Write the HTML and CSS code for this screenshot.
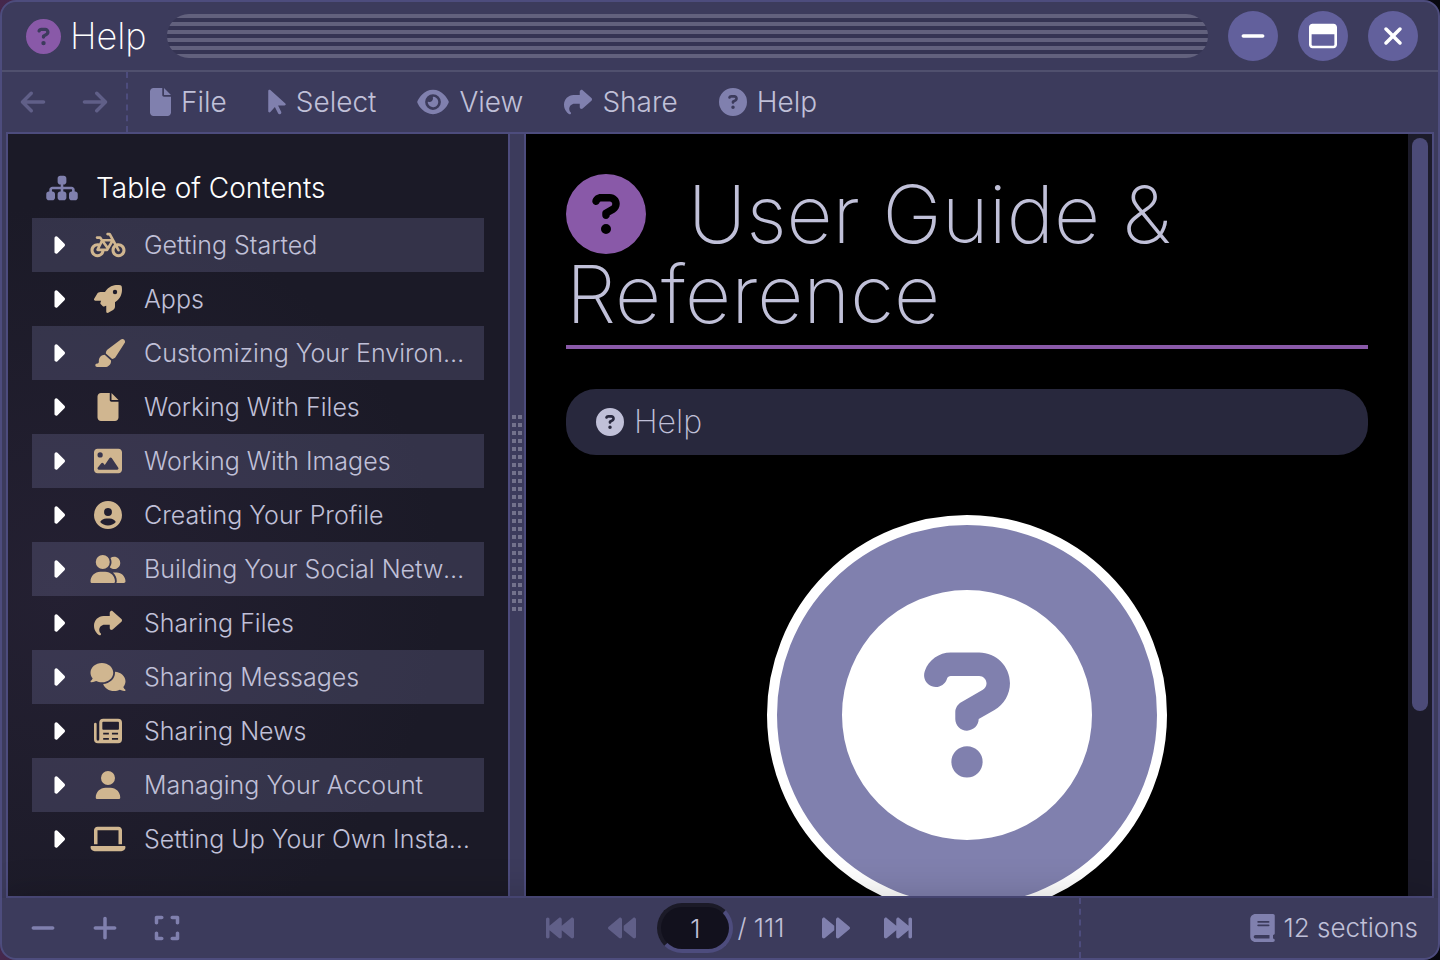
FILE: index.html
```html
<!DOCTYPE html>
<html lang="en">
<head>
<meta charset="utf-8">
<title>Help</title>
<link rel="stylesheet" href="styles.css">
</head>
<body>
<svg class="sprite" aria-hidden="true">
<symbol id="question" viewBox="0 0 512 512"><path d="M256 512A256 256 0 1 0 256 0a256 256 0 1 0 0 512zM169.8 165.3c7.9-22.3 29.1-37.3 52.8-37.3h58.3c34.9 0 63.1 28.3 63.1 63.1c0 22.6-12.1 43.5-31.7 54.8L280 264.4c-.2 13-10.9 23.6-24 23.6c-13.3 0-24-10.7-24-24V250.5c0-8.6 4.6-16.5 12.1-20.8l44.3-25.4c4.7-2.7 7.6-7.7 7.6-13.1c0-8.4-6.8-15.1-15.1-15.1H222.6c-3.4 0-6.4 2.1-7.5 5.3l-.4 1.2c-4.4 12.5-18.2 19-30.6 14.6s-19-18.2-14.6-30.6l.4-1.2zM224 352a32 32 0 1 1 64 0 32 32 0 1 1 -64 0z"/></symbol>
<symbol id="file" viewBox="0 0 384 512"><path d="M0 64C0 28.7 28.7 0 64 0H224V128c0 17.7 14.3 32 32 32H384V448c0 35.3-28.7 64-64 64H64c-35.3 0-64-28.7-64-64V64zm384 64H256V0L384 128z"/></symbol>
<symbol id="pointer" viewBox="0 0 320 512"><path d="M0 55.2V426c0 12.2 9.9 22 22 22c6.3 0 12.4-2.7 16.6-7.5L121.2 346l58.1 116.3c7.9 15.8 27.1 22.2 42.9 14.3s22.2-27.1 14.3-42.9L179.8 320H297.9c12.2 0 22.1-9.9 22.1-22.1c0-6.3-2.7-12.3-7.4-16.5L38.6 37.9C34.3 34.1 28.9 32 23.2 32C10.4 32 0 42.4 0 55.2z"/></symbol>
<symbol id="eye" viewBox="0 0 576 512"><path d="M288 32c-80.8 0-145.5 36.8-192.6 80.6C48.6 156 17.3 208 2.5 243.7c-3.3 7.9-3.3 16.7 0 24.6C17.3 304 48.6 356 95.4 399.4C142.5 443.2 207.2 480 288 480s145.5-36.8 192.6-80.6c46.8-43.5 78.1-95.4 93-131.1c3.3-7.9 3.3-16.7 0-24.6c-14.9-35.7-46.2-87.7-93-131.1C433.5 68.8 368.8 32 288 32zM144 256a144 144 0 1 1 288 0 144 144 0 1 1 -288 0zm144-64c0 35.3-28.7 64-64 64c-7.1 0-13.9-1.2-20.3-3.3c-5.5-1.8-11.9 1.6-11.7 7.4c.3 6.9 1.3 13.8 3.2 20.7c13.7 51.2 66.4 81.6 117.6 67.9s81.6-66.4 67.9-117.6c-11.1-41.5-47.8-69.4-88.6-71.1c-5.8-.2-9.2 6.1-7.4 11.7c2.1 6.4 3.3 13.2 3.3 20.3z"/></symbol>
<symbol id="share" viewBox="0 0 512 512"><path d="M307 34.8c-11.5 5.1-19 16.6-19 29.2v64H176C78.8 128 0 206.8 0 304C0 417.3 81.5 467.9 100.2 478.1c2.5 1.4 5.3 1.9 8.1 1.9c10.9 0 19.7-8.9 19.7-19.7c0-7.5-4.3-14.4-9.8-19.5C108.8 431.9 96 414.4 96 384c0-53 43-96 96-96h96v64c0 12.6 7.4 24.1 19 29.2s25 3 34.4-5.4l160-144c6.7-6.1 10.6-14.7 10.6-23.8s-3.8-17.7-10.6-23.8l-160-144c-9.4-8.5-22.9-10.6-34.4-5.4z"/></symbol>
<symbol id="left" viewBox="0 0 448 512"><path d="M9.4 233.4c-12.5 12.5-12.5 32.8 0 45.3l160 160c12.5 12.5 32.8 12.5 45.3 0s12.5-32.8 0-45.3L109.2 288 416 288c17.7 0 32-14.3 32-32s-14.3-32-32-32l-306.7 0L214.6 118.6c12.5-12.5 12.5-32.8 0-45.3s-32.8-12.5-45.3 0l-160 160z"/></symbol>
<symbol id="minus" viewBox="0 0 448 512"><path d="M432 256c0 17.7-14.3 32-32 32L48 288c-17.7 0-32-14.3-32-32s14.3-32 32-32l352 0c17.7 0 32 14.3 32 32z"/></symbol>
<symbol id="plus" viewBox="0 0 448 512"><path d="M256 80c0-17.7-14.3-32-32-32s-32 14.3-32 32V224H48c-17.7 0-32 14.3-32 32s14.3 32 32 32H192V432c0 17.7 14.3 32 32 32s32-14.3 32-32V288H400c17.7 0 32-14.3 32-32s-14.3-32-32-32H256V80z"/></symbol>
<symbol id="expand" viewBox="0 0 448 512"><path d="M32 32C14.3 32 0 46.3 0 64v96c0 17.7 14.3 32 32 32s32-14.3 32-32V96h64c17.7 0 32-14.3 32-32s-14.3-32-32-32H32zM64 352c0-17.7-14.3-32-32-32s-32 14.3-32 32v96c0 17.7 14.3 32 32 32h96c17.7 0 32-14.3 32-32s-14.3-32-32-32H64V352zM320 32c-17.7 0-32 14.3-32 32s14.3 32 32 32h64v64c0 17.7 14.3 32 32 32s32-14.3 32-32V64c0-17.7-14.3-32-32-32H320zM448 352c0-17.7-14.3-32-32-32s-32 14.3-32 32v64H320c-17.7 0-32 14.3-32 32s14.3 32 32 32h96c17.7 0 32-14.3 32-32V352z"/></symbol>
<symbol id="close" viewBox="0 0 384 512"><path d="M342.6 150.6c12.5-12.5 12.5-32.8 0-45.3s-32.8-12.5-45.3 0L192 210.7 86.6 105.4c-12.5-12.5-32.8-12.5-45.3 0s-12.5 32.8 0 45.3L146.7 256 41.4 361.4c-12.5 12.5-12.5 32.8 0 45.3s32.8 12.5 45.3 0L192 301.3 297.4 406.6c12.5 12.5 32.8 12.5 45.3 0s12.5-32.8 0-45.3L237.3 256 342.6 150.6z"/></symbol>
<symbol id="maximize" viewBox="0 0 512 512"><path d="M.3 89.5C.1 91.6 0 93.8 0 96V224 416c0 35.3 28.7 64 64 64l384 0c35.3 0 64-28.7 64-64V224 96c0-35.3-28.7-64-64-64H64c-2.2 0-4.4 .1-6.5 .3c-9.2 .9-17.8 3.8-25.5 8.2C21.8 46.5 13.4 55.1 7.7 65.5c-3.9 7.3-6.5 15.4-7.4 24zM48 224H464l0 192c0 8.8-7.2 16-16 16L64 432c-8.8 0-16-7.2-16-16l0-192z"/></symbol>
<symbol id="sitemap" viewBox="0 0 576 512"><path d="M208 80c0-26.5 21.5-48 48-48h64c26.5 0 48 21.5 48 48v64c0 26.5-21.5 48-48 48h-8v40H464c30.9 0 56 25.1 56 56v32h8c26.5 0 48 21.5 48 48v64c0 26.5-21.5 48-48 48H464c-26.5 0-48-21.5-48-48V368c0-26.5 21.5-48 48-48h8V288c0-4.4-3.6-8-8-8H312v40h8c26.5 0 48 21.5 48 48v64c0 26.5-21.5 48-48 48H256c-26.5 0-48-21.5-48-48V368c0-26.5 21.5-48 48-48h8V280H112c-4.4 0-8 3.6-8 8v32h8c26.5 0 48 21.5 48 48v64c0 26.5-21.5 48-48 48H48c-26.5 0-48-21.5-48-48V368c0-26.5 21.5-48 48-48h8V288c0-30.9 25.1-56 56-56H264V192h-8c-26.5 0-48-21.5-48-48V80z"/></symbol>
<symbol id="caret" viewBox="0 0 256 512"><path d="M246.6 278.6c12.5-12.5 12.5-32.8 0-45.3l-128-128c-9.2-9.2-22.9-11.9-34.9-6.9s-19.8 16.6-19.8 29.6l0 256c0 12.9 7.8 24.6 19.8 29.6s25.7 2.2 34.9-6.9l128-128z"/></symbol>
<symbol id="bicycle" viewBox="0 0 640 512"><path d="M312 32c-13.3 0-24 10.7-24 24s10.7 24 24 24h25.7l34.6 64H222.9l-27.4-38C191 99.7 183.7 96 176 96H120c-13.3 0-24 10.7-24 24s10.7 24 24 24h43.7l22.1 30.7-26.6 53.1c-10-2.5-20.5-3.8-31.2-3.8C57.3 224 0 281.3 0 352s57.3 128 128 128c65.3 0 119.1-48.9 127-112h49c8.5 0 16.3-4.5 20.7-11.8l84.8-143.5 21.7 40.1C402.4 276.3 384 312 384 352c0 70.7 57.3 128 128 128s128-57.3 128-128s-57.3-128-128-128c-13.5 0-26.5 2.1-38.7 6L375.4 48.8C369.8 38.4 359 32 347.2 32H312zM458.6 303.7l32.3 59.7c6.3 11.7 20.9 16 32.5 9.7s16-20.9 9.7-32.5l-32.3-59.7c3.6-.6 7.4-.9 11.2-.9c39.8 0 72 32.2 72 72s-32.2 72-72 72s-72-32.2-72-72c0-18.6 7-35.5 18.6-48.3zM133.2 368h65c-7.3 32.1-36 56-70.2 56c-39.8 0-72-32.2-72-72s32.2-72 72-72c1.7 0 3.4 .1 5.1 .2l-24.2 48.5c-9 18.1 4.1 39.4 24.3 39.4zm33.7-48l50.7-101.3 72.9 101.2-.1 .1H166.8zm90.6-128H365.9L317 274.8 257.4 192z"/></symbol>
<symbol id="rocket" viewBox="0 0 512 512"><path d="M156.6 384.9L125.7 354c-8.5-8.5-11.5-20.8-7.7-32.2c3-8.9 7-20.5 11.8-33.8L24 288c-8.6 0-16.6-4.6-20.9-12.1s-4.2-16.7 .2-24.1l52.5-88.5c13-21.9 36.5-35.3 61.9-35.3l82.3 0c2.4-4 4.8-7.7 7.2-11.3C289.1-4.1 411.1-8.1 483.9 5.3c11.6 2.1 20.6 11.2 22.8 22.8c13.4 72.9 9.3 194.8-111.4 276.7c-3.5 2.4-7.3 4.8-11.3 7.2v82.3c0 25.4-13.4 49-35.3 61.9l-88.5 52.5c-7.4 4.4-16.6 4.5-24.1 .2s-12.1-12.2-12.1-20.9V380.8c-14.1 4.9-26.4 8.9-35.7 11.9c-11.2 3.6-23.4 .5-31.8-7.8zM384 168a40 40 0 1 0 0-80 40 40 0 1 0 0 80z"/></symbol>
<symbol id="brush" viewBox="-24 0 576 512"><path d="M339.3 367.1c27.3-3.9 51.9-19.4 67.2-42.9L568.2 74.1c12.6-19.5 9.4-45.3-7.6-61.2S517.7-4.4 499.1 9.6L262.4 187.2c-24 18-38.2 46.1-38.4 76.1L339.3 367.1zm-19.6 25.4l-116-104.4C143.9 290.3 96 339.6 96 400c0 3.9 .2 7.8 .6 11.6C98.4 429.1 86.4 448 68.8 448H64c-17.7 0-32 14.3-32 32s14.3 32 32 32H208c61.9 0 112-50.1 112-112c0-2.5-.1-5-.2-7.5z"/></symbol>
<symbol id="image" viewBox="0 0 512 512"><path d="M0 96C0 60.7 28.7 32 64 32H448c35.3 0 64 28.7 64 64V416c0 35.3-28.7 64-64 64H64c-35.3 0-64-28.7-64-64V96zM323.8 202.5c-4.5-6.6-11.9-10.5-19.8-10.5s-15.4 3.9-19.8 10.5l-87 127.6L170.7 297c-4.6-5.7-11.5-9-18.7-9s-14.2 3.3-18.7 9l-64 80c-5.8 7.2-6.9 17.1-2.9 25.4s12.4 13.6 21.6 13.6h96 32H424c8.9 0 17.1-4.9 21.2-12.8s3.6-17.4-1.4-24.7l-120-176zM112 192a48 48 0 1 0 0-96 48 48 0 1 0 0 96z"/></symbol>
<symbol id="profile" viewBox="0 0 512 512"><path d="M399 384.2C376.9 345.8 335.4 320 288 320H224c-47.4 0-88.9 25.8-111 64.2c35.2 39.2 86.2 63.8 143 63.8s107.8-24.7 143-63.8zM0 256a256 256 0 1 1 512 0A256 256 0 1 1 0 256zm256 16a72 72 0 1 0 0-144 72 72 0 1 0 0 144z"/></symbol>
<symbol id="group" viewBox="0 0 640 512"><path d="M96 128a128 128 0 1 1 256 0A128 128 0 1 1 96 128zM0 482.3C0 383.8 79.8 304 178.3 304h91.4C368.2 304 448 383.8 448 482.3c0 16.4-13.3 29.7-29.7 29.7H29.7C13.3 512 0 498.7 0 482.3zM609.3 512H471.4c5.4-9.4 8.6-20.3 8.6-32v-8c0-60.7-27.1-115.2-69.8-151.8c2.4-.1 4.7-.2 7.1-.2h61.4C567.8 320 640 392.2 640 481.3c0 17-13.8 30.7-30.7 30.7zM432 256c-31 0-59-12.6-79.3-32.9C372.4 196.5 384 163.6 384 128c0-26.8-6.6-52.1-18.3-74.3C384.3 40.1 407.2 32 432 32c61.9 0 112 50.1 112 112s-50.1 112-112 112z"/></symbol>
<symbol id="comments" viewBox="0 0 640 512"><path d="M208 352c114.9 0 208-78.8 208-176S322.9 0 208 0S0 78.8 0 176c0 38.6 14.7 74.3 39.6 103.4c-3.5 9.4-8.7 17.7-14.2 24.7c-4.8 6.2-9.7 11-13.3 14.3c-1.8 1.6-3.3 2.9-4.3 3.7c-.5 .4-.9 .7-1.1 .8l-.2 .2C1 327.2-1.4 334.4 .8 340.9S9.1 352 16 352c21.8 0 43.8-5.6 62.1-12.5c9.2-3.5 17.8-7.4 25.2-11.4C134.1 343.3 169.8 352 208 352zM448 176c0 112.3-99.1 196.9-216.5 207C255.8 457.4 336.4 512 432 512c38.2 0 73.9-8.7 104.7-23.9c7.5 4 16 7.9 25.2 11.4c18.3 6.9 40.3 12.5 62.1 12.5c6.9 0 13.1-4.5 15.2-11.1c2.1-6.6-.2-13.8-5.8-17.9l-.2-.2c-.2-.2-.6-.4-1.1-.8c-1-.8-2.5-2-4.3-3.7c-3.6-3.3-8.5-8.1-13.3-14.3c-5.5-7-10.7-15.4-14.2-24.7c24.9-29 39.6-64.7 39.6-103.4c0-92.8-84.9-168.9-192.6-175.5c.4 5.1 .6 10.3 .6 15.5z"/></symbol>
<symbol id="news" viewBox="0 0 512 512"><path d="M168 32H440a72 72 0 0 1 72 72V408a72 72 0 0 1-72 72H72a72 72 0 0 1-72-72V128a24 24 0 0 1 48 0V408a24 24 0 0 0 48 0V104a72 72 0 0 1 72-72zM168 88a16 16 0 0 0-16 16V216a16 16 0 0 0 16 16H440a16 16 0 0 0 16-16V104a16 16 0 0 0-16-16zM168 288h104v32H168zM328 288h112v32H328zM168 384h104v32H168zM328 384h112v32H328z"/></symbol>
<symbol id="user" viewBox="0 0 448 512"><path d="M224 256A128 128 0 1 0 224 0a128 128 0 1 0 0 256zm-45.7 48C79.8 304 0 383.8 0 482.3C0 498.7 13.3 512 29.7 512H418.3c16.4 0 29.7-13.3 29.7-29.7C448 383.8 368.2 304 269.7 304H178.3z"/></symbol>
<symbol id="laptop" viewBox="0 0 640 512"><path d="M128 32C92.7 32 64 60.7 64 96V352h64V96H512V352h64V96c0-35.3-28.7-64-64-64H128zM19.2 384C8.6 384 0 392.6 0 403.2C0 445.6 34.4 480 76.8 480H563.2c42.4 0 76.8-34.4 76.8-76.8c0-10.6-8.6-19.2-19.2-19.2H19.2z"/></symbol>
<symbol id="forward" viewBox="0 0 512 512"><path d="M52.5 440.6c-9.5 7.9-22.8 9.7-34.1 4.4S0 428.4 0 416V96C0 83.6 7.2 72.3 18.4 67s24.5-3.6 34.1 4.4L224 214.3V256v41.7L52.5 440.6zM256 352V256 128 96c0-12.4 7.2-23.7 18.4-29s24.5-3.6 34.1 4.4l192 160c7.3 6.1 11.5 15.1 11.5 24.6s-4.2 18.5-11.5 24.6l-192 160c-9.5 7.9-22.8 9.7-34.1 4.4s-18.4-16.6-18.4-29V352z"/></symbol>
<symbol id="last" viewBox="0 0 512 512"><path d="M18.4 445c11.2 5.3 24.5 3.6 34.1-4.4L224 297.7V416c0 12.4 7.2 23.7 18.4 29s24.5 3.6 34.1-4.4L448 297.7V416c0 17.7 14.3 32 32 32s32-14.3 32-32V96c0-17.7-14.3-32-32-32s-32 14.3-32 32V214.3L276.5 71.4c-9.5-7.9-22.8-9.7-34.1-4.4S224 83.6 224 96V214.3L52.5 71.4c-9.5-7.9-22.8-9.7-34.1-4.4S0 83.6 0 96V416c0 12.4 7.2 23.7 18.4 29z"/></symbol>
<symbol id="book" viewBox="0 0 448 512"><path d="M96 0C43 0 0 43 0 96V416c0 53 43 96 96 96H384h32c17.7 0 32-14.3 32-32s-14.3-32-32-32V384c17.7 0 32-14.3 32-32V32c0-17.7-14.3-32-32-32H384 96zm0 384H352v64H96c-17.7 0-32-14.3-32-32s14.3-32 32-32zm32-240c0-8.8 7.2-16 16-16H336c8.8 0 16 7.2 16 16s-7.2 16-16 16H144c-8.8 0-16-7.2-16-16zm16 48H336c8.8 0 16 7.2 16 16s-7.2 16-16 16H144c-8.8 0-16-7.2-16-16s7.2-16 16-16z"/></symbol>
</svg>
<div class="window">
  <header class="titlebar">
    <svg class="title-icon"><use href="#question"/></svg>
    <span class="title">Help</span>
    <div class="grip"></div>
    <div class="controls">
      <button class="control" aria-label="Minimize"><svg class="icon"><use href="#minus"/></svg></button>
      <button class="control" aria-label="Maximize"><svg class="icon"><use href="#maximize"/></svg></button>
      <button class="control" aria-label="Close"><svg class="icon"><use href="#close"/></svg></button>
    </div>
  </header>
  <nav class="menubar">
    <div class="history">
      <button class="tool" aria-label="Back" disabled><svg class="icon"><use href="#left"/></svg></button>
      <button class="tool" aria-label="Forward" disabled><svg class="icon flip"><use href="#left"/></svg></button>
    </div>
    <button class="menu"><svg class="icon w21"><use href="#file"/></svg>File</button>
    <button class="menu"><svg class="icon w18"><use href="#pointer"/></svg>Select</button>
    <button class="menu"><svg class="icon w32"><use href="#eye"/></svg>View</button>
    <button class="menu"><svg class="icon"><use href="#share"/></svg>Share</button>
    <button class="menu"><svg class="icon"><use href="#question"/></svg>Help</button>
  </nav>
  <div class="body">
    <aside class="sidebar">
      <h2 class="toc-title"><svg class="icon w32"><use href="#sitemap"/></svg>Table of Contents</h2>
      <ul class="toc">
        <li><a class="entry" href="#"><svg class="caret"><use href="#caret"/></svg><svg class="icon w36"><use href="#bicycle"/></svg><span class="label">Getting Started</span></a></li>
        <li><a class="entry" href="#"><svg class="caret"><use href="#caret"/></svg><svg class="icon w36"><use href="#rocket"/></svg><span class="label">Apps</span></a></li>
        <li><a class="entry" href="#"><svg class="caret"><use href="#caret"/></svg><svg class="icon w36"><use href="#brush"/></svg><span class="label">Customizing Your Environment</span></a></li>
        <li><a class="entry" href="#"><svg class="caret"><use href="#caret"/></svg><svg class="icon w36"><use href="#file"/></svg><span class="label">Working With Files</span></a></li>
        <li><a class="entry" href="#"><svg class="caret"><use href="#caret"/></svg><svg class="icon w36"><use href="#image"/></svg><span class="label">Working With Images</span></a></li>
        <li><a class="entry" href="#"><svg class="caret"><use href="#caret"/></svg><svg class="icon w36"><use href="#profile"/></svg><span class="label">Creating Your Profile</span></a></li>
        <li><a class="entry" href="#"><svg class="caret"><use href="#caret"/></svg><svg class="icon w36"><use href="#group"/></svg><span class="label">Building Your Social Network</span></a></li>
        <li><a class="entry" href="#"><svg class="caret"><use href="#caret"/></svg><svg class="icon w36"><use href="#share"/></svg><span class="label">Sharing Files</span></a></li>
        <li><a class="entry" href="#"><svg class="caret"><use href="#caret"/></svg><svg class="icon w36"><use href="#comments"/></svg><span class="label">Sharing Messages</span></a></li>
        <li><a class="entry" href="#"><svg class="caret"><use href="#caret"/></svg><svg class="icon w36"><use href="#news"/></svg><span class="label">Sharing News</span></a></li>
        <li><a class="entry" href="#"><svg class="caret"><use href="#caret"/></svg><svg class="icon w36"><use href="#user"/></svg><span class="label">Managing Your Account</span></a></li>
        <li><a class="entry" href="#"><svg class="caret"><use href="#caret"/></svg><svg class="icon w36"><use href="#laptop"/></svg><span class="label">Setting Up Your Own Instance</span></a></li>
      </ul>
    </aside>
    <div class="splitter"><div class="dots"></div></div>
    <main class="page">
      <h1 class="heading"><svg class="heading-icon"><use href="#question"/></svg>User Guide &amp; Reference</h1>
      <div class="crumbs"><a class="crumb" href="#"><svg class="icon"><use href="#question"/></svg>Help</a></div>
      <div class="emblem"><svg class="emblem-icon"><use href="#question"/></svg></div>
    </main>
    <div class="scrollbar"><div class="thumb"></div></div>
  </div>
  <footer class="footer">
    <div class="zoom">
      <button class="tool" aria-label="Zoom out"><svg class="icon"><use href="#minus"/></svg></button>
      <button class="tool" aria-label="Zoom in"><svg class="icon"><use href="#plus"/></svg></button>
      <button class="tool" aria-label="Fit"><svg class="icon"><use href="#expand"/></svg></button>
    </div>
    <div class="pager">
      <button class="tool" aria-label="First page" disabled><svg class="icon flip"><use href="#last"/></svg></button>
      <button class="tool" aria-label="Previous page" disabled><svg class="icon flip"><use href="#forward"/></svg></button>
      <input class="page-input" aria-label="Page" value="1">
      <span class="total">/ 111</span>
      <button class="tool" aria-label="Next page"><svg class="icon"><use href="#forward"/></svg></button>
      <button class="tool" aria-label="Last page"><svg class="icon"><use href="#last"/></svg></button>
    </div>
    <div class="status"><svg class="icon w25"><use href="#book"/></svg>12 sections</div>
  </footer>
</div>
</body>
</html>
```
FILE: styles.css
```css
* { box-sizing: border-box; }
html, body { height: 100%; }
body {
  margin: 0;
  background: linear-gradient(90deg, #45284c, #08080f);
  font: 300 26px/32px Inter, sans-serif;
  color: #c0c0d8;
}
h1, h2, ul { margin: 0; padding: 0; font-weight: inherit; }
ul { list-style: none; }
a { color: inherit; text-decoration: none; }
button { border: 0; margin: 0; padding: 0; background: none; font: inherit; color: inherit; }
svg { fill: currentColor; fill-rule: evenodd; flex: none; }
.sprite { position: absolute; width: 0; height: 0; }
.icon { width: 28px; height: 28px; }
.w18 { width: 18px; }
.w21 { width: 21px; }
.w25 { width: 25px; }
.w32 { width: 32px; }
.w36 { width: 36px; }
.flip { transform: scaleX(-1); }

.window {
  display: flex;
  flex-direction: column;
  height: 100vh;
  border: 2px solid #4d4c7d;
  border-radius: 16px;
  background: #3c3b5c;
  overflow: hidden;
}
.titlebar {
  display: flex;
  align-items: center;
  flex: none;
  height: 70px;
  padding: 0 20px 0 24px;
  border-bottom: 2px solid #50506e;
  color: #fff;
}
.title-icon { width: 35px; height: 35px; color: #8959a8; }
.title { margin: 0 20px 0 9px; font-size: 36px; font-weight: 250; line-height: 44px; }
.grip {
  flex: 1;
  height: 44px;
  border-radius: 22px;
  background: repeating-linear-gradient(#62617d 0 4px, #353453 4px 8px);
}
.controls { display: flex; gap: 20px; margin-left: 20px; }
.control {
  display: grid;
  place-items: center;
  width: 50px;
  height: 50px;
  border-radius: 50%;
  background: #62609c;
}

.menubar { display: flex; flex: none; height: 60px; }
.history {
  display: flex;
  margin-right: 22px;
  border-right: 2px dashed #4d4c7d;
}
.tool { display: grid; place-items: center; width: 62px; height: 60px; color: #8080ae; }
.tool:disabled { color: #605f88; }
.menu {
  display: flex;
  align-items: center;
  gap: 10px;
  margin-right: 41px;
  font-size: 28px;
}
.menu svg, .toc-title svg, .status svg { color: #8080ae; }

.body {
  display: flex;
  flex: 1;
  min-height: 0;
  margin: 0 4px;
  border: 2px solid #4d4c7d;
}
.sidebar {
  flex: 0 0 500px;
  min-width: 0;
  padding: 38px 24px 0;
  background: radial-gradient(circle at 10% 60%, #242032, #1b1a27 60%);
}
.toc-title {
  display: flex;
  align-items: center;
  gap: 18px;
  height: 46px;
  padding: 0 0 14px 14px;
  font-size: 28px;
  color: #fff;
}
.entry {
  display: flex;
  align-items: center;
  height: 54px;
  padding: 0 10px 0 18px;
}
.toc li:nth-child(odd) { background: #8080ae40; }
.caret { width: 16px; height: 28px; color: #fff; }
.entry .icon { margin: 0 18px 0 24px; color: #d0b690; }
.label {
  overflow: hidden;
  white-space: nowrap;
  text-overflow: ellipsis;
  font-size: 25px;
}
.splitter {
  display: flex;
  align-items: center;
  justify-content: center;
  flex: none;
  width: 18px;
  border: solid #4d4c7d;
  border-width: 0 2px;
  background: #3c3b5c;
}
.dots {
  width: 10px;
  height: 200px;
  background:
    linear-gradient(90deg, transparent 4px, #3c3b5c 4px 6px, transparent 6px),
    repeating-linear-gradient(#73728c 0 4px, #3c3b5c 4px 8px);
}
.page {
  flex: 1;
  min-width: 0;
  padding: 40px 40px 0;
  background: #000;
  overflow: hidden;
}
.heading {
  padding-bottom: 11px;
  border-bottom: 4px solid #8959a8;
  font-size: 80px;
  font-weight: 250;
  line-height: 80px;
}
.heading-icon {
  width: 80px;
  height: 80px;
  margin-right: 42px;
  color: #8959a8;
  vertical-align: top;
}
.crumbs {
  margin-top: 40px;
  padding: 13px 30px;
  border-radius: 30px;
  background: #28283d;
  font-size: 32px;
  font-weight: 250;
  line-height: 40px;
}
.crumb { display: flex; align-items: center; gap: 10px; }
.emblem {
  display: grid;
  place-items: center;
  width: 400px;
  height: 400px;
  margin: 60px auto 0;
  border: 10px solid #fff;
  border-radius: 50%;
  background: #8080ae;
}
.emblem-icon { width: 250px; height: 250px; color: #fff; }
.scrollbar { flex: none; width: 24px; padding: 4px; background: #1c1b2a; }
.thumb { height: 76%; border-radius: 8px; background: #4c4b78; }

.footer {
  display: grid;
  grid-template-columns: 1fr auto 1fr;
  flex: none;
  height: 60px;
  box-shadow: 0 0 40px #0003;
}
.zoom { display: flex; padding-left: 10px; }
.pager { display: flex; align-items: center; padding-left: 18px; }
.page-input {
  width: 76px;
  height: 50px;
  margin: 0 4px;
  padding: 0;
  border: 4px solid #4d4c7d;
  border-color: #1b1a27 #4d4c7d #4d4c7d #1b1a27;
  border-radius: 25px;
  background: #12111d;
  font: inherit;
  color: inherit;
  text-align: center;
}
.total { margin-right: 20px; }
.status {
  display: flex;
  align-items: center;
  justify-content: flex-end;
  justify-self: end;
  gap: 9px;
  width: 359px;
  padding-right: 20px;
  border-left: 2px dashed #4d4c7d;
}
```
